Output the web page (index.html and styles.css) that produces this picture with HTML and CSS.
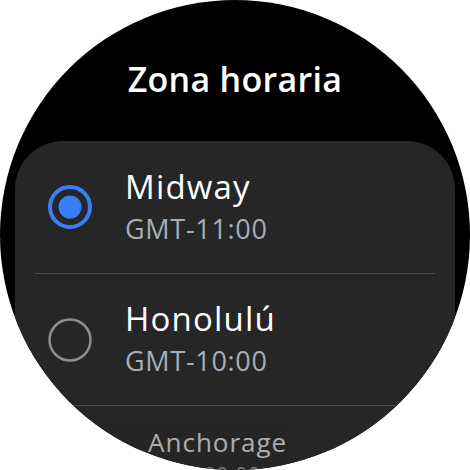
FILE: index.html
```html
<!DOCTYPE html>
<html lang="es">
<head>
<meta charset="utf-8">
<link rel="stylesheet" href="styles.css">
</head>
<body>
<div class="watch">
  <h1 class="title">Zona horaria</h1>
  <div class="card">
    <div class="item">
      <svg class="radio" viewBox="0 0 44 44" width="44" height="44">
        <circle cx="22" cy="22" r="20" fill="none" stroke="#3b7df6" stroke-width="4"/>
        <circle cx="22" cy="22" r="11.5" fill="#3b7df6"/>
      </svg>
      <div class="text">
        <div class="name">Midway</div>
        <div class="offset">GMT-11:00</div>
      </div>
    </div>
    <div class="item">
      <svg class="radio" viewBox="0 0 44 44" width="44" height="44">
        <circle cx="22" cy="22" r="20.5" fill="none" stroke="#8e8e8e" stroke-width="2.5"/>
      </svg>
      <div class="text">
        <div class="name">Honolulú</div>
        <div class="offset">GMT-10:00</div>
      </div>
    </div>
    <div class="item item-far">
      <svg class="radio" viewBox="0 0 44 44" width="44" height="44">
        <circle cx="22" cy="22" r="20.5" fill="none" stroke="#8e8e8e" stroke-width="2.5"/>
      </svg>
      <div class="text">
        <div class="name">Anchorage</div>
        <div class="offset">GMT-09:00</div>
      </div>
    </div>
  </div>
</div>
</body>
</html>
```
FILE: styles.css
```css
html, body {
  margin: 0;
  padding: 0;
  background: #ffffff;
}
.watch {
  width: 470px;
  height: 470px;
  border-radius: 50%;
  overflow: hidden;
  background: #000000;
  display: flex;
  flex-direction: column;
  font-family: "Open Sans", Roboto, sans-serif;
}
.title {
  margin: 0;
  padding-top: 57px;
  height: 141px;
  flex: none;
  box-sizing: border-box;
  text-align: center;
  color: #ffffff;
  font-family: "Open Sans", Roboto, sans-serif;
  font-weight: 600;
  font-size: 34px;
  line-height: 44px;
  letter-spacing: 0.3px;
}
.card {
  margin: 0 15px;
  background: #262626;
  border-radius: 48px;
  flex: none;
  height: 400px;
  display: flex;
  flex-direction: column;
}
.item {
  height: 133px;
  flex: none;
  box-sizing: border-box;
  display: flex;
  align-items: center;
  gap: 33px;
  margin: 0 20px;
  padding-left: 13px;
  border-bottom: 1px solid #4a4a4a;
}
.item + .item {
  height: 132px;
}
.item-far {
  transform: scale(0.79);
  transform-origin: center top;
  opacity: 0.62;
  border-bottom: none;
}
.radio {
  flex: none;
  display: block;
}
.text {
  display: flex;
  flex-direction: column;
}
.name {
  color: #ffffff;
  font-size: 33px;
  line-height: 42px;
  letter-spacing: 1.2px;
}
.offset {
  color: #a7aeb6;
  font-size: 27px;
  line-height: 41px;
  letter-spacing: 0.7px;
}
```
